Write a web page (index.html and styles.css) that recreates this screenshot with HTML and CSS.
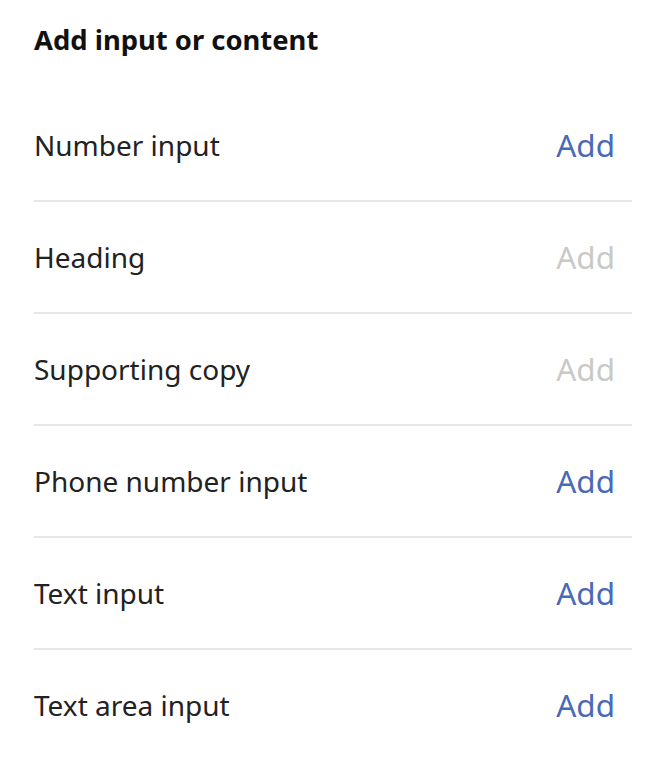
FILE: index.html
```html
<!DOCTYPE html>
<html>
<head>
<meta charset="utf-8">
<link rel="stylesheet" href="styles.css">
</head>
<body>
<div class="panel">
  <h1 class="title">Add input or content</h1>
  <ul class="list">
    <li class="row"><span class="label">Number input</span><span class="add">Add</span></li>
    <li class="row"><span class="label">Heading</span><span class="add disabled">Add</span></li>
    <li class="row"><span class="label">Supporting copy</span><span class="add disabled">Add</span></li>
    <li class="row"><span class="label">Phone number input</span><span class="add">Add</span></li>
    <li class="row"><span class="label">Text input</span><span class="add">Add</span></li>
    <li class="row last"><span class="label">Text area input</span><span class="add">Add</span></li>
  </ul>
</div>
</body>
</html>
```

FILE: styles.css
```css
html, body {
  margin: 0;
  padding: 0;
  background: #ffffff;
}
body {
  font-family: "Noto Sans", "Open Sans", sans-serif;
  color: #222222;
}
.panel {
  padding: 0 22px 0 34px;
}
.title {
  margin: 0;
  padding-top: 21px;
  height: 69px;
  font-size: 27.4px;
  line-height: 38px;
  font-weight: 700;
  color: #111111;
}
.list {
  list-style: none;
  margin: 0;
  padding: 0;
}
.row {
  display: flex;
  justify-content: space-between;
  align-items: center;
  height: 110px;
  border-bottom: 2px solid #e6e6e6;
}
.row.last {
  border-bottom: none;
}
.label {
  font-size: 28px;
  line-height: 38px;
}
.add {
  font-size: 31.5px;
  line-height: 38px;
  color: #4a6ab5;
  padding-right: 17px;
}
.add.disabled {
  color: #c9c9c9;
}
```
